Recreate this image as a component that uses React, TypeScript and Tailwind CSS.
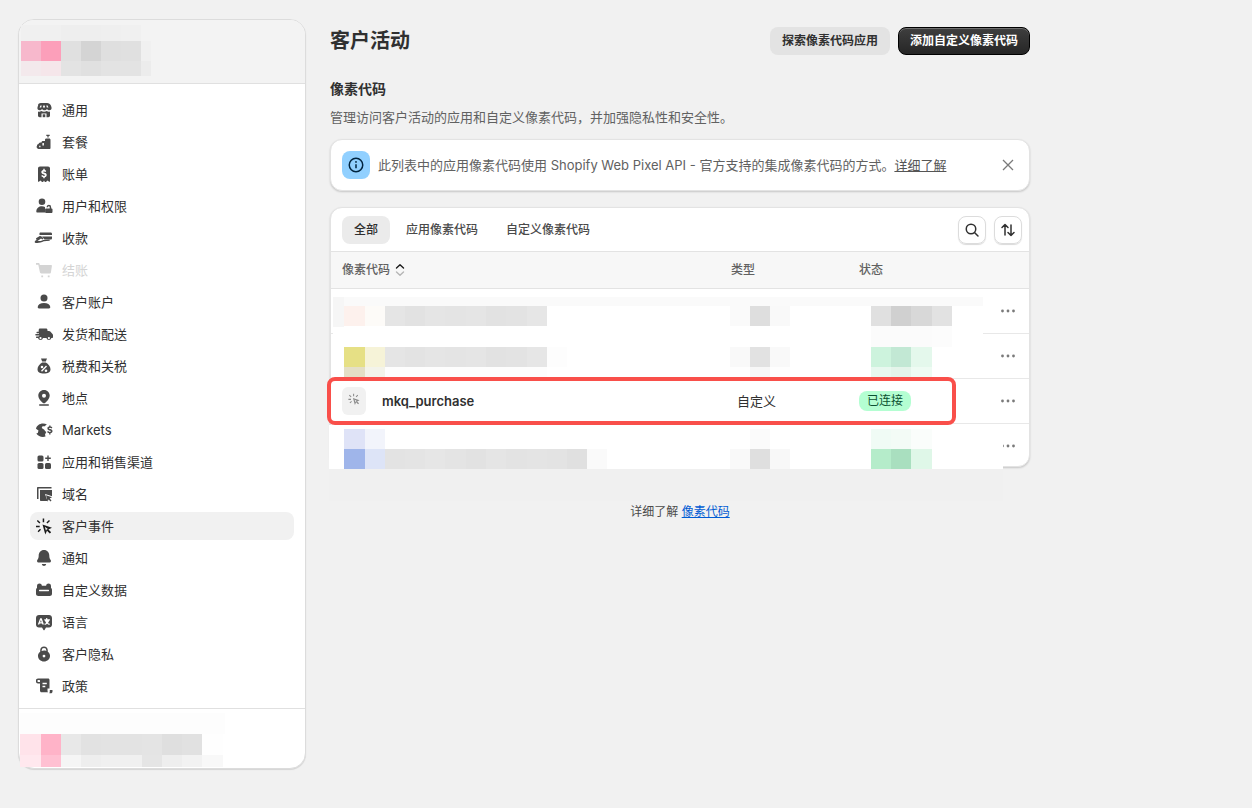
import React from "react";

type Block = [number, number, number, number, string];

const P = ({ d }: { d: string }) => <path d={d} fillRule="evenodd" clipRule="evenodd" />;

const icons: Record<string, React.ReactNode> = {
  store: (
    <>
      <P d="M7 3h6c2 0 3.200 1 3.900 2.600l.6 1.600c.5 1.700-.7 3-2.200 3-1 0-1.800-.5-2.300-1.300-.6.800-1.500 1.300-2.500 1.300s-1.900-.5-2.500-1.300c-.5.800-1.300 1.300-2.300 1.300-1.500 0-2.700-1.300-2.200-3l.6-1.600C3.800 4 5 3 7 3Zm-.6 2.600-.8 2h1.600l.5-2H6.400Zm2.900 0-.4 2h2.200l-.4-2H9.300Zm3 0 .5 2h1.600l-.8-2h-1.300Z" />
      <P d="M4 11.500c1.200.4 2.300.2 3.200-.4 1.700 1 3.900 1 5.600 0 .9.600 2 .8 3.200.4v4c0 1-.7 1.700-1.700 1.700H12.500v-3.700h-5v3.700H5.700c-1 0-1.700-.7-1.700-1.700v-4Z" />
      <rect x="8.700" y="14.300" width="2.600" height="2.900" />
    </>
  ),
  plan: (
    <>
      <P d="M12.300 2.700h3.400v1.300h-1.100v1.600h-1.200V4h-1.100V2.700Z" />
      <P d="M12.300 6.500h2.900c.7 0 1.300.6 1.300 1.300v8.200c0 .6-.5 1-1 1H4.500A2 2 0 0 1 3 13.800c0-1 .7-1.700 1.500-1.800.2-1 .9-1.500 1.700-1.600h1.300c.1-.9.800-1.300 1.500-1.300H11V7.800c0-.7.600-1.300 1.300-1.300ZM8.400 11v2.500h1.500V11H8.400Zm-3.200 2.800v1.500h1.300v-1.500H5.200Z" />
    </>
  ),
  bill: (
    <P d="M6 2.500h8c1.200 0 2 .8 2 2v12.800c0 .5-.6.700-.9.400l-1.500-1.200-1.700 1.400c-.3.200-.7.200-1 0L10 16.500l-.9 1.400c-.3.200-.7.200-1 0l-1.700-1.400-1.500 1.200c-.3.300-.9.100-.9-.4V4.500c0-1.200.8-2 2-2Zm4.700 2.300H9.300v1.100C8.100 6.200 7.300 7 7.300 8.100c0 1.300 1 1.900 2.200 2.200 1 .3 1.400.5 1.400.9 0 .4-.4.700-1 .7-.7 0-1.300-.3-1.800-.8l-.9 1c.5.600 1.200 1 2.100 1.100v1h1.400v-1c1.300-.3 2-1.100 2-2.200 0-1.300-.9-1.900-2.200-2.200-1.100-.3-1.400-.5-1.400-.8 0-.4.300-.6.900-.6.500 0 1 .2 1.500.6l.8-1c-.5-.5-1-.8-1.600-.9v-1.300Z" />
  ),
  users: (
    <>
      <P d="M8 2.500a3.300 3.300 0 1 1 0 6.600 3.300 3.300 0 0 1 0-6.600Z" />
      <P d="M2.300 15.500c0-3.200 2.500-5.200 5.700-5.200 1.100 0 2.100.2 3 .7v5.500H3.300c-.6 0-1-.4-1-1Z" />
      <P d="M14.800 8.800a2.400 2.400 0 0 1 2.400 2.400v1.300h.3c.5 0 1 .4 1 1v2.500c0 .5-.5 1-1 1h-5.400c-.5 0-1-.5-1-1v-2.500c0-.6.500-1 1-1h3.600v-1.300c0-.5-.4-1-.9-1s-.9.400-.9 1h-1.400a2.400 2.400 0 0 1 2.300-2.400Z" />
    </>
  ),
  pay: (
    <>
      <P d="M6.500 4.500h10.200c.7 0 1.300.6 1.300 1.300V7H5.500v-1.500c0-.5.400-1 1-1Z" />
      <P d="M8 8.500h10v1.700c0 .8-.6 1.300-1.300 1.300H10.500l-2.500-3Z" />
      <P d="M2 10.200l3.800-2.200 1.400.2 2.200 2-.9 1.200-1.500-.8-3.500 2.400c1.500.2 3.500.1 5.800-1.100l6.200-.4.300 1.300-6 .5c-3 1.500-6 1.900-8.800 1.400-.4-.8-.3-1.300.2-2L5 10.800l-2.500 1.200-.5-1.800Z" />
    </>
  ),
  cart: (
    <>
      <P d="M2 3h2.300c.7 0 1.300.5 1.400 1.200l.1.800H17c.6 0 1 .5.900 1.100l-1 6.300c-.1.600-.6 1.100-1.200 1.100H7.300c-.7 0-1.300-.5-1.400-1.200L4.300 4.700H2V3Z" />
      <path d="M7.300 15.500h1.800v1.800H7.300v-1.800Zm6.500 0h1.800v1.800h-1.800v-1.800Z" />
    </>
  ),
  person: (
    <>
      <circle cx="10" cy="6" r="3.500" />
      <P d="M10 11c3.500 0 6 1.500 6.300 4 .1.700-.5 1.500-1.300 1.500H5c-.8 0-1.400-.8-1.300-1.500C4 12.500 6.500 11 10 11Z" />
    </>
  ),
  truck: (
    <P d="M6 4.500h6c.8 0 1.500.7 1.500 1.500v1H15c.5 0 1 .2 1.300.6l2.200 2.500c.3.300.5.700.5 1.100V13c0 .6-.4 1-1 1h-.6a2.600 2.600 0 0 1-5 0H9a2.600 2.600 0 0 1-5 0H2.500a.8.800 0 0 1 0-1.500h2c.4-.5 1-.9 1.500-1H1.800a.8.800 0 0 1 0-1.500H5V9.300H3a.8.800 0 0 1 0-1.500h1.700V6c0-.8.500-1.500 1.300-1.500Zm.5 8.500a1.100 1.100 0 1 0 0 2.200 1.100 1.100 0 0 0 0-2.200Zm8.400 0a1.100 1.100 0 1 0 0 2.200 1.100 1.100 0 0 0 0-2.200Z" />
  ),
  tax: (
    <>
      <P d="M7 2.500h6l-1.200 3H8.200L7 2.500Z" />
      <P d="M8.200 6.500h3.600c2.600 1.300 4.700 4.200 4.700 6.800 0 3-2.500 4.200-6.500 4.200s-6.500-1.200-6.500-4.200c0-2.600 2.100-5.500 4.700-6.800ZM12 9.500l-5 5.300 1 .9 5-5.300-1-.9ZM8 9.700a1.300 1.300 0 1 0 0 2.600 1.300 1.300 0 0 0 0-2.600Zm4 3.800a1.300 1.300 0 1 0 0 2.600 1.300 1.300 0 0 0 0-2.600Z" />
    </>
  ),
  pin: (
    <>
      <P d="M10 2c3.300 0 5.700 2.500 5.700 5.600 0 3-2.700 5.900-4.600 7.300-.7.500-1.500.5-2.200 0C7 13.500 4.300 10.600 4.300 7.600 4.300 4.500 6.700 2 10 2Zm0 3.800a2 2 0 1 0 0 4 2 2 0 0 0 0-4Z" />
      <rect x="5" y="16.300" width="10" height="1.500" rx=".7" />
    </>
  ),
  markets: (
    <>
      <P d="M9 3.500c1.500 0 2.800.4 3.900 1.100-.9.300-1.600.9-2 1.700H8.500L7.700 8l2.600 1.700c.3 1 1 1.700 2 2.200l-1.300 2.600.5 1.900c-.8.300-1.600.5-2.500.5a8.200 8.200 0 0 1-6.700-3.500l1.500-.5.700-2.400L2 8.700C2.700 5.700 5.500 3.500 9 3.500Z" />
      <P d="M15.200 5.500h1.300v1.100c.8.100 1.500.5 1.900 1l-.9.900c-.4-.4-.9-.7-1.500-.7-.5 0-.9.200-.9.600 0 .3.300.5 1.100.7 1.300.3 2.300.8 2.300 2.100 0 1-.8 1.700-2 1.900v1.400h-1.300v-1.300c-.9-.1-1.700-.6-2.200-1.200l1-.9c.4.500 1 .8 1.700.8s1.100-.2 1.100-.7c0-.4-.4-.6-1.300-.8-1.200-.3-2.100-.8-2.100-2 0-1 .7-1.700 1.800-1.800V5.500Z" transform="translate(0 2)" />
    </>
  ),
  apps: (
    <>
      <rect x="3.500" y="3.500" width="6" height="6" rx="1.500" />
      <rect x="3.500" y="11" width="6" height="6" rx="1.500" />
      <rect x="11" y="11" width="6" height="6" rx="1.500" />
      <P d="M13.300 3.500h1.400v2.100h2.100V7h-2.100v2.100h-1.400V7h-2.100V5.600h2.100V3.500Z" />
    </>
  ),
  domain: (
    <>
      <P d="M3.500 3h14v1.500H4.500V15H3V4c0-.6.400-1 .5-1Z" />
      <P d="M6 6h12v6.200l-2.800-.9-4.200-1.300 2.500 7H7c-.6 0-1-.4-1-1V6Z" />
      <P d="M12 11.300l6 2-2.300 1.100 1.800 2-1 1-1.900-2-1 2.300-1.600-6.400Z" />
    </>
  ),
  cursor: (
    <>
      <P d="M8.500 8.500l9.500 3.200-3.600 1.700 2.800 2.800-1.400 1.400-2.800-2.800-1.700 3.600-2.800-9.900Zm2.300 2.300 1.200 4 .6-1.300 1.300-.6-3.100-2.100Z" />
      <path d="M8.700 2.500h1.500v3.700H8.700V2.500ZM3.800 4l2.600 2.600-1 1L2.800 5l1-1ZM15 4l1 1-2.600 2.600-1-1L15 4ZM2 9.800h3.700v1.500H2V9.800ZM6 12.800l1 1-2.400 2.400-1-1L6 12.800Z" />
    </>
  ),
  bell: (
    <>
      <P d="M10 2c3.300 0 5.300 2.500 5.300 5.500 0 2 .3 3.200 1.400 4.500.6.800.3 2.500-1.100 2.500H4.400c-1.400 0-1.700-1.700-1.100-2.500C4.400 10.700 4.700 9.500 4.700 7.500 4.700 4.500 6.700 2 10 2Z" />
      <P d="M7.800 16h4.400c-.2 1.200-1.100 2-2.200 2s-2-.8-2.200-2Z" />
    </>
  ),
  data: (
    <P d="M5.500 3.500c1.200 0 2.200.7 2.400 2.200h4.200c.2-1.500 1.200-2.200 2.400-2.200 1.300 0 2.500.8 2.500 2.500v1.700c.6.500 1 1.200 1 2v4c0 1.300-1.100 2.300-2.300 2.300H4.300c-1.200 0-2.300-1-2.300-2.300v-4c0-.8.400-1.500 1-2V6c0-1.700 1.200-2.500 2.500-2.500ZM5.500 9.800a.8.800 0 0 0 0 1.500h9a.8.800 0 0 0 0-1.500h-9Z" />
  ),
  lang: (
    <>
      <P d="M5 3h10c1.700 0 3 1.300 3 3v6.500c0 1.700-1.300 3-3 3h-3l-1.500 2.500c-.2.400-.8.400-1 0L8 15.500H5c-1.700 0-3-1.300-3-3V6c0-1.700 1.300-3 3-3Zm1.200 3.300L3.800 12.500h1.500l.4-1.100h2.300l.4 1.100h1.500L7.700 6.300H6.200Zm.7 1.800.7 2.100H6.200l.7-2.100ZM13.300 6h-1.200v1.200h-1.800v1.200h.6c.3 1 .7 1.800 1.300 2.500-.5.400-1.100.7-1.900.9l.5 1.100c.9-.2 1.700-.6 2.300-1.100.6.500 1.400.9 2.300 1.100l.5-1.100c-.8-.2-1.400-.5-1.900-.9.600-.7 1-1.500 1.300-2.500h.6V7.200h-2.600V6Z" />
    </>
  ),
  lock: (
    <P d="M10 2.500c2.200 0 3.800 1.700 3.800 3.800v1.500c1.300.9 2.200 2.300 2.200 3.900v.3c0 3-2.700 5.500-6 5.500s-6-2.500-6-5.500v-.3c0-1.600.9-3 2.200-3.900V6.300c0-2.100 1.600-3.800 3.800-3.800Zm0 1.500a2.300 2.300 0 0 0-2.300 2.300v.6A7 7 0 0 1 10 6.500c.8 0 1.600.1 2.300.4v-.6A2.300 2.300 0 0 0 10 4Zm0 6.700a1.400 1.400 0 1 0 0 2.800 1.400 1.400 0 0 0 0-2.800Z" />
  ),
  policy: (
    <>
      <P d="M4 2.500h10c1 0 1.500.7 1.500 1.500v8.500h-2V13.500c0 1.500 0 2 .5 2.800H7.500c-.8 0-1.500-.7-1.500-1.500V7.500H4c-1.200 0-2-.8-2-2V4.300C2 3.200 2.800 2.500 4 2.500Zm0 1.500c-.3 0-.5.200-.5.500v1c0 .3.200.5.500.5h2V4.500c0-.3-.2-.5-.5-.5H4Zm4.500 2.800v1.500h4.300V6.800H8.500Zm0 3v1.500h2.800V9.800H8.500Z" />
      <P d="M15 14h3.500v1.500c0 1-.7 1.800-1.700 1.800h-1.500c.4-.5.500-1.300.5-2v-1.300Z" />
    </>
  ),
};

const Icon = ({ name, className = "" }: { name: string; className?: string }) => (
  <svg viewBox="0 0 20 20" className={`w-5 h-5 shrink-0 fill-current ${className}`} aria-hidden="true">
    {icons[name]}
  </svg>
);

const nav: [string, string][] = [
  ["store", "通用"],
  ["plan", "套餐"],
  ["bill", "账单"],
  ["users", "用户和权限"],
  ["pay", "收款"],
  ["cart", "结账"],
  ["person", "客户账户"],
  ["truck", "发货和配送"],
  ["tax", "税费和关税"],
  ["pin", "地点"],
  ["markets", "Markets"],
  ["apps", "应用和销售渠道"],
  ["domain", "域名"],
  ["cursor", "客户事件"],
  ["bell", "通知"],
  ["data", "自定义数据"],
  ["lang", "语言"],
  ["lock", "客户隐私"],
  ["policy", "政策"],
];

const strip = (xs: number[], y: number, h: number, colors: string[]): Block[] =>
  colors.map((c, i) => [xs[i], y, xs[i + 1] - xs[i], h, c] as Block);

const gridX = [21, 41, 61, 81, 101, 121, 141, 151];
const footX = [20, 41, 61, 81, 101, 122, 142, 162, 182, 202, 223];
const nameX = [385, 405, 425, 445, 466, 486, 506, 527, 547];
const longX = [385, 405, 425, 445, 466, 486, 506, 527, 547, 567, 587];

const mosaic: Block[] = [
  // store name in the sidebar header
  ...strip(gridX, 25, 16, ["#f0f0f0", "#f0f0f0", "#eeeeee", "#eeeeee", "#efefef", "#f0f0f0", "#f3f3f3"]),
  ...strip(gridX, 41, 20, ["#f7b8cc", "#fc9fba", "#e0e0e0", "#d4d4d4", "#dfdfdf", "#e0e0e0", "#f0f0f0"]),
  ...strip(gridX, 61, 15, ["#f3e9ec", "#f5e6ea", "#e3e3e3", "#e0e0e0", "#e3e3e3", "#e3e3e3", "#ececec"]),
  // account in the sidebar footer
  [20, 713, 205, 21, "#fdfdfd"],
  ...strip(footX, 734, 21, ["#ffe3ea", "#ffb3c8", "#e8e8e8", "#e2e2e2", "#e3e3e3", "#e3e3e3", "#e4e4e4", "#dfdfdf", "#e1e1e1", "#fefefe"]),
  ...strip(footX, 755, 12, ["#ffe8ee", "#ffc0d2", "#f5f5f5", "#eeeeee", "#f0f0f0", "#f0f0f0", "#e5e5e5", "#eeeeee", "#f2f2f2", "#f8f8f8"]),
  // rows above the highlighted one
  [333, 297, 650, 81, "#ffffff"],
  [333, 297, 650, 9, "#fafafa"],
  [333, 297, 11, 30, "#f6f6f6"],
  ...strip([344, 365, 385], 306, 20, ["#fdf1ed", "#fdfbf8"]),
  ...strip(nameX, 306, 20, ["#e5e5e5", "#e2e2e2", "#e5e5e5", "#e4e4e4", "#e5e5e5", "#e2e2e2", "#e3e3e3", "#e6e6e6"]),
  ...strip([730, 750, 770, 790], 306, 20, ["#fafafa", "#dedede", "#f9f9f9"]),
  ...strip([871, 891, 911, 932, 952], 306, 20, ["#e0e0e0", "#d0d0d0", "#d8d8d8", "#e2e2e2"]),
  ...strip([871, 891, 911, 932, 952], 326, 21, ["#fbfbfb", "#fbfbfb", "#fbfbfb", "#fcfcfc"]),
  ...strip([344, 365, 385], 347, 20, ["#e6e085", "#f6f3d8"]),
  ...strip(nameX, 347, 20, ["#e5e5e5", "#e3e3e3", "#e5e5e5", "#e4e4e4", "#e5e5e5", "#e2e2e2", "#e3e3e3", "#e6e6e6"]),
  [547, 347, 20, 20, "#fdfdfd"],
  ...strip([344, 365, 385], 367, 11, ["#e4dfc6", "#f3f3ea"]),
  [385, 367, 162, 11, "#fdfdfd"],
  ...strip([730, 750, 770, 790], 347, 20, ["#f9f9f9", "#e2e2e2", "#f9f9f9"]),
  ...strip([730, 750, 770, 790], 367, 11, ["#fefefe", "#f7f7f7", "#fefefe"]),
  ...strip([871, 891, 911, 932], 347, 20, ["#cdf3dd", "#c2e8d4", "#e4f8ec"]),
  ...strip([871, 891, 911, 932], 367, 11, ["#e8f8ef", "#e4f4ea", "#eefbf3"]),
  // rows below the highlighted one
  [329, 425, 674, 44, "#ffffff"],
  [329, 469, 674, 32, "#f0f0f0"],
  ...strip([344, 365, 385], 429, 20, ["#dfe3f7", "#f2f4fb"]),
  ...strip([344, 365, 385], 449, 20, ["#9fb5ea", "#dde4f7"]),
  ...strip(longX, 449, 20, ["#e3e3e3", "#e4e4e4", "#e6e6e6", "#e4e4e4", "#e2e2e2", "#e5e5e5", "#e3e3e3", "#e4e4e4", "#e3e3e3", "#e0e0e0"]),
  [587, 449, 20, 20, "#fafafa"],
  ...strip([750, 770], 429, 20, ["#fbfbfb"]),
  ...strip([730, 750, 770, 790], 449, 20, ["#f9f9f9", "#dfdfdf", "#f8f8f8"]),
  ...strip([871, 891, 911, 932], 429, 20, ["#f0fbf5", "#f3fbf6", "#fafdfb"]),
  ...strip([871, 891, 911, 932], 449, 20, ["#b5ecca", "#a9dfbf", "#dff7e8"]),
];

const Dots = () => (
  <svg viewBox="0 0 14 4" className="w-[14px] h-1 fill-[#7a7a7a]" aria-hidden="true">
    <circle cx="1.500" cy="2" r="1.400" />
    <circle cx="7" cy="2" r="1.400" />
    <circle cx="12.500" cy="2" r="1.400" />
  </svg>
);

const Row = ({ children, last = false }: { children?: React.ReactNode; last?: boolean }) => (
  <div className={`flex items-center pl-[11px] pr-[14px] ${last ? "h-[43px]" : "h-[45px] border-b border-[#e8e8e8]"}`}>
    <div className="flex-1 flex items-center min-w-0">{children}</div>
    <Dots />
  </div>
);

export default function App() {
  return (
    <div className="relative min-h-[808px] bg-[#f1f1f1] text-[13px] leading-5 text-[#303030] font-['Inter','Noto_Sans_CJK_SC',sans-serif] flex items-start pl-[18px] pt-[19px] gap-6 overflow-hidden">
      <aside className="w-[288px] h-[750px] shrink-0 bg-white rounded-2xl border border-[#dcdcdc] shadow-[0_1px_1px_rgba(0,0,0,0.12)] flex flex-col overflow-hidden">
        <div className="h-[64px] shrink-0 bg-[#f3f3f3] border-b border-[#e0e0e0]" />
        <nav className="flex-1 flex flex-col gap-1 pt-3 px-[11px]">
          {nav.map(([icon, label]) => {
            const active = label === "客户事件";
            const disabled = label === "结账";
            return (
              <div
                key={label}
                className={`h-7 shrink-0 flex items-center gap-2 px-1 rounded-lg ${active ? "bg-[#f1f1f1]" : ""} ${disabled ? "text-[#d4d4d4]" : "text-[#303030]"}`}
              >
                <Icon name={icon} className={disabled ? "text-[#d4d4d4]" : active ? "text-[#1a1a1a]" : "text-[#4a4a4a]"} />
                <span>{label}</span>
              </div>
            );
          })}
        </nav>
        <div className="h-[60px] shrink-0 border-t border-[#e0e0e0]" />
      </aside>

      <main className="w-[700px] shrink-0 pt-2">
        <header className="flex items-center justify-between h-7">
          <h1 className="text-[20px] font-semibold text-[#303030] leading-7">客户活动</h1>
          <div className="flex gap-2 text-[12px] font-semibold">
            <button className="h-7 w-[120px] rounded-lg bg-[#e3e3e3] text-[#303030]">探索像素代码应用</button>
            <button className="h-7 w-[132px] rounded-lg bg-gradient-to-b from-[#3f3f3f] to-[#262626] text-white border border-black shadow-[inset_0_1px_0_rgba(255,255,255,0.25)]">添加自定义像素代码</button>
          </div>
        </header>

        <h2 className="mt-[24px] text-[14px] font-semibold text-[#303030] leading-5">像素代码</h2>
        <p className="mt-2 text-[#616161] leading-5">管理访问客户活动的应用和自定义像素代码，并加强隐私性和安全性。</p>

        <div className="mt-3 h-[52px] bg-white rounded-xl border border-[#e3e3e3] shadow-[0_1px_2px_rgba(0,0,0,0.18)] flex items-center pl-[11px] pr-[15px]">
          <div className="w-7 h-7 rounded-lg bg-[#91d0ff] flex items-center justify-center">
            <svg viewBox="0 0 16 16" className="w-4 h-4 text-[#00243f]" fill="none" stroke="currentColor" strokeWidth="1.500" aria-hidden="true">
              <circle cx="8" cy="8" r="6.750" />
              <path d="M8 7.200v4" />
              <circle cx="8" cy="4.900" r=".9" fill="currentColor" stroke="none" />
            </svg>
          </div>
          <span className="ml-2 text-[#616161]">
            此列表中的应用像素代码使用 Shopify Web Pixel API - 官方支持的集成像素代码的方式。<span className="underline text-[#555555]">详细了解</span>
          </span>
          <svg viewBox="0 0 12 12" className="ml-auto w-3 h-3 stroke-[#7a7a7a]" fill="none" strokeWidth="1.300" aria-hidden="true">
            <path d="M1 1l10 10M11 1 1 11" />
          </svg>
        </div>

        <section className="mt-4 h-[260px] bg-white rounded-xl border border-[#e3e3e3] shadow-[0_1px_2px_rgba(0,0,0,0.18)] overflow-hidden">
          <div className="h-[44px] flex items-center pl-[11px] pr-[7px] gap-1 border-b border-[#e3e3e3] text-[12px] font-medium">
            <span className="h-7 w-12 rounded-lg bg-[#ebebeb] flex items-center justify-center">全部</span>
            <span className="h-7 w-[96px] flex items-center justify-center text-[#4a4a4a]">应用像素代码</span>
            <span className="h-7 w-[108px] flex items-center justify-center text-[#4a4a4a]">自定义像素代码</span>
            <div className="ml-auto flex gap-2">
              <span className="w-7 h-7 rounded-lg border border-[#dcdcdc] shadow-[0_1px_1px_rgba(0,0,0,0.15)] flex items-center justify-center">
                <svg viewBox="0 0 16 16" className="w-4 h-4 stroke-[#303030]" fill="none" strokeWidth="1.500" aria-hidden="true">
                  <circle cx="7" cy="7" r="4.750" />
                  <path d="M10.500 10.500 14 14" strokeLinecap="round" />
                </svg>
              </span>
              <span className="w-7 h-7 rounded-lg border border-[#dcdcdc] shadow-[0_1px_1px_rgba(0,0,0,0.15)] flex items-center justify-center">
                <svg viewBox="0 0 16 16" className="w-4 h-4 stroke-[#303030]" fill="none" strokeWidth="1.500" strokeLinecap="round" strokeLinejoin="round" aria-hidden="true">
                  <path d="M5 13V2.500M2 5.500l3-3 3 3M11 3v10.500M8 10.500l3 3 3-3" />
                </svg>
              </span>
            </div>
          </div>
          <div className="h-[37px] flex items-center bg-[#f7f7f7] border-b border-[#e3e3e3] text-[12px] font-medium text-[#616161] pl-[11px]">
            <span className="w-[389px] flex items-center gap-[5px]">
              像素代码
              <svg viewBox="0 0 10 14" className="w-[10px] h-[14px]" fill="none" strokeWidth="1.400" strokeLinecap="round" strokeLinejoin="round" aria-hidden="true">
                <path d="M1.500 5 5 1.800 8.500 5" stroke="#1a1a1a" />
                <path d="M1.500 9 5 12.200 8.500 9" stroke="#b5b5b5" />
              </svg>
            </span>
            <span className="w-[128px]">类型</span>
            <span>状态</span>
          </div>
          <Row />
          <Row />
          <Row>
            <span className="w-6 h-7 rounded-md bg-[#f1f1f1] flex justify-center pt-[5px] shrink-0">
              <svg viewBox="0 0 20 20" className="w-[14px] h-[14px] fill-[#8a8a8a]" aria-hidden="true">{icons.cursor}</svg>
            </span>
            <span className="ml-4 w-[355px] font-semibold text-[#303030]">mkq_purchase</span>
            <span className="w-[122px] text-[#303030]">自定义</span>
            <span className="h-5 w-[52px] rounded-lg bg-[#b4fed2] text-[#0c5132] text-[12px] flex items-center justify-center">已连接</span>
          </Row>
          <Row last />
        </section>

        <p className="mt-[35px] text-center text-[12px] text-[#4a4a4a] leading-5">
          详细了解 <span className="underline text-[#005bd3]">像素代码</span>
        </p>
      </main>

      <div className="absolute inset-0 pointer-events-none" aria-hidden="true">
        {mosaic.map(([x, y, w, h, c], i) => (
          <div key={i} className="absolute" style={{ left: x, top: y, width: w, height: h, background: c }} />
        ))}
      </div>
      <div className="absolute left-[327px] top-[377px] w-[629px] h-[48px] rounded-lg border-4 border-[#f94f4a] pointer-events-none" />
    </div>
  );
}
